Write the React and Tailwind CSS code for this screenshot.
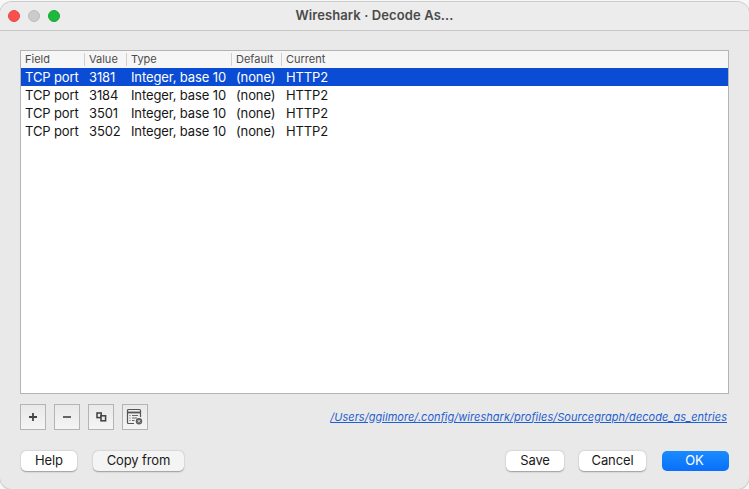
const rows = [
  ["TCP port", "3181", "Integer, base 10", "(none)", "HTTP2"],
  ["TCP port", "3184", "Integer, base 10", "(none)", "HTTP2"],
  ["TCP port", "3501", "Integer, base 10", "(none)", "HTTP2"],
  ["TCP port", "3502", "Integer, base 10", "(none)", "HTTP2"],
];
const widths = ["w-[64px]", "w-[42px]", "w-[105px]", "w-[50px]", "flex-1"];
const headers = ["Field", "Value", "Type", "Default", "Current"];

function ToolBtn({ children }) {
  return (
    <div className="w-[26px] h-[26px] border border-[#b4b4b4] bg-gradient-to-b from-[#e9e9e9] to-[#f5f5f5] flex items-center justify-center">
      {children}
    </div>
  );
}

function Btn({ children, w, cls = "bg-white" }) {
  return (
    <div className={`${w} ${cls} h-[20px] rounded-[5px] shadow-[0_0.5px_1.5px_rgba(0,0,0,0.35)] flex items-center justify-center text-[13px] tracking-[-0.1px] text-[#1a1a1a]`}>
      {children}
    </div>
  );
}

export default function App() {
  return (
    <div className="w-[749px] h-[489px] overflow-hidden bg-[#f7f7f7] pt-[2px]" style={{ fontFamily: "Inter, 'Liberation Sans', sans-serif" }}>
      <div className="w-full h-[487px] bg-[#e9e9e9] rounded-[12px] shadow-[0_0_0_1px_#cccccc] flex flex-col">
        <div className="h-[29px] shrink-0 bg-[#ececec] border-b border-[#c6c6c6] relative flex items-center justify-center rounded-t-[12px]">
          <div className="absolute left-[8px] top-[8px] flex gap-[8px]">
            <div className="w-[12px] h-[12px] rounded-full bg-[#fb4f4f] border border-[#e8494a]" />
            <div className="w-[12px] h-[12px] rounded-full bg-[#cbcbcb] border border-[#bcbcbc]" />
            <div className="w-[12px] h-[12px] rounded-full bg-[#1db83e] border border-[#1aa936]" />
          </div>
          <span className="text-[13px] font-semibold tracking-[0.1px] text-[#4a4a4a]">Wireshark · Decode As...</span>
        </div>
        <div className="flex-1 flex flex-col px-[20px] pt-[19px]">
          <div className="h-[344px] shrink-0 bg-white border border-[#b4b4b4] flex flex-col">
            <div className="h-[17px] flex items-center text-[11px] text-[#4c4c4c] bg-[#f6f6f6]">
              {headers.map((h, i) => (
                <div key={h} className={`${widths[i]} h-[13px] flex items-center pl-[4px] ${i < 4 ? "border-r border-[#cfcfcf]" : ""}`}>{h}</div>
              ))}
            </div>
            {rows.map((r, ri) => (
              <div key={r[1]} className={`h-[18px] flex items-center pt-[1px] text-[13px] tracking-[-0.12px] ${ri === 0 ? "bg-[#0a4cd3] text-white" : "text-[#161616]"}`}>
                {r.map((c, i) => (
                  <div key={i} className={`${widths[i]} pl-[4px] whitespace-nowrap`}>{c}</div>
                ))}
              </div>
            ))}
          </div>
          <div className="mt-[10px] flex items-center justify-between">
            <div className="flex gap-[8px]">
              <ToolBtn>
                <svg width="10" height="10" viewBox="0 0 10 10"><path d="M5 1v8M1 5h8" stroke="#444" strokeWidth="1.8" /></svg>
              </ToolBtn>
              <ToolBtn>
                <svg width="10" height="10" viewBox="0 0 10 10"><path d="M1 5h8" stroke="#555" strokeWidth="1.8" /></svg>
              </ToolBtn>
              <ToolBtn>
                <svg width="12" height="12" viewBox="0 0 12 12" fill="none" stroke="#3f3f3f" strokeWidth="1.5"><rect x="2" y="2" width="4.2" height="4.6" /><rect x="6" y="4.8" width="4.6" height="5" fill="#ececec" /></svg>
              </ToolBtn>
              <ToolBtn>
                <svg width="18" height="18" viewBox="0 0 18 18" fill="none"><path d="M8 15.5H2.5a1 1 0 0 1-1-1v-12a1 1 0 0 1 1-1h11a1 1 0 0 1 1 1V9" stroke="#555" strokeWidth="1.2" /><path d="M1.5 4.5h13" stroke="#555" strokeWidth="1.8" /><path d="M3.5 7.5h1M6 7.5h6M3.5 10h1M6 10h5M3.5 12.5h1M6 12.5h2.5" stroke="#666" /><circle cx="13" cy="13.3" r="3.2" fill="#5f5f5f" /><path d="M11.8 12.1l2.4 2.4M14.2 12.1l-2.4 2.4" stroke="#eee" strokeWidth="0.9" /></svg>
              </ToolBtn>
            </div>
            <a className="text-[11px] italic underline tracking-[0.04px] text-[#1f5fd0] pr-[2px]">/Users/ggilmore/.config/wireshark/profiles/Sourcegraph/decode_as_entries</a>
          </div>
          <div className="mt-[21px] flex items-center">
            <div className="w-[1px]" />
            <Btn w="w-[56px]">Help</Btn>
            <div className="w-[16px]" />
            <Btn w="w-[91px]" cls="bg-[#f4f4f4]">Copy from</Btn>
            <div className="flex-1" />
            <Btn w="w-[58px]">Save</Btn>
            <div className="w-[15px]" />
            <Btn w="w-[67px]">Cancel</Btn>
            <div className="w-[16px]" />
            <div className="w-[67px] h-[20px] pr-[2px] rounded-[5px] bg-gradient-to-b from-[#1b8bfd] to-[#0a6ffb] flex items-center justify-center text-[13px] text-white">OK</div>
          </div>
        </div>
      </div>
    </div>
  );
}
